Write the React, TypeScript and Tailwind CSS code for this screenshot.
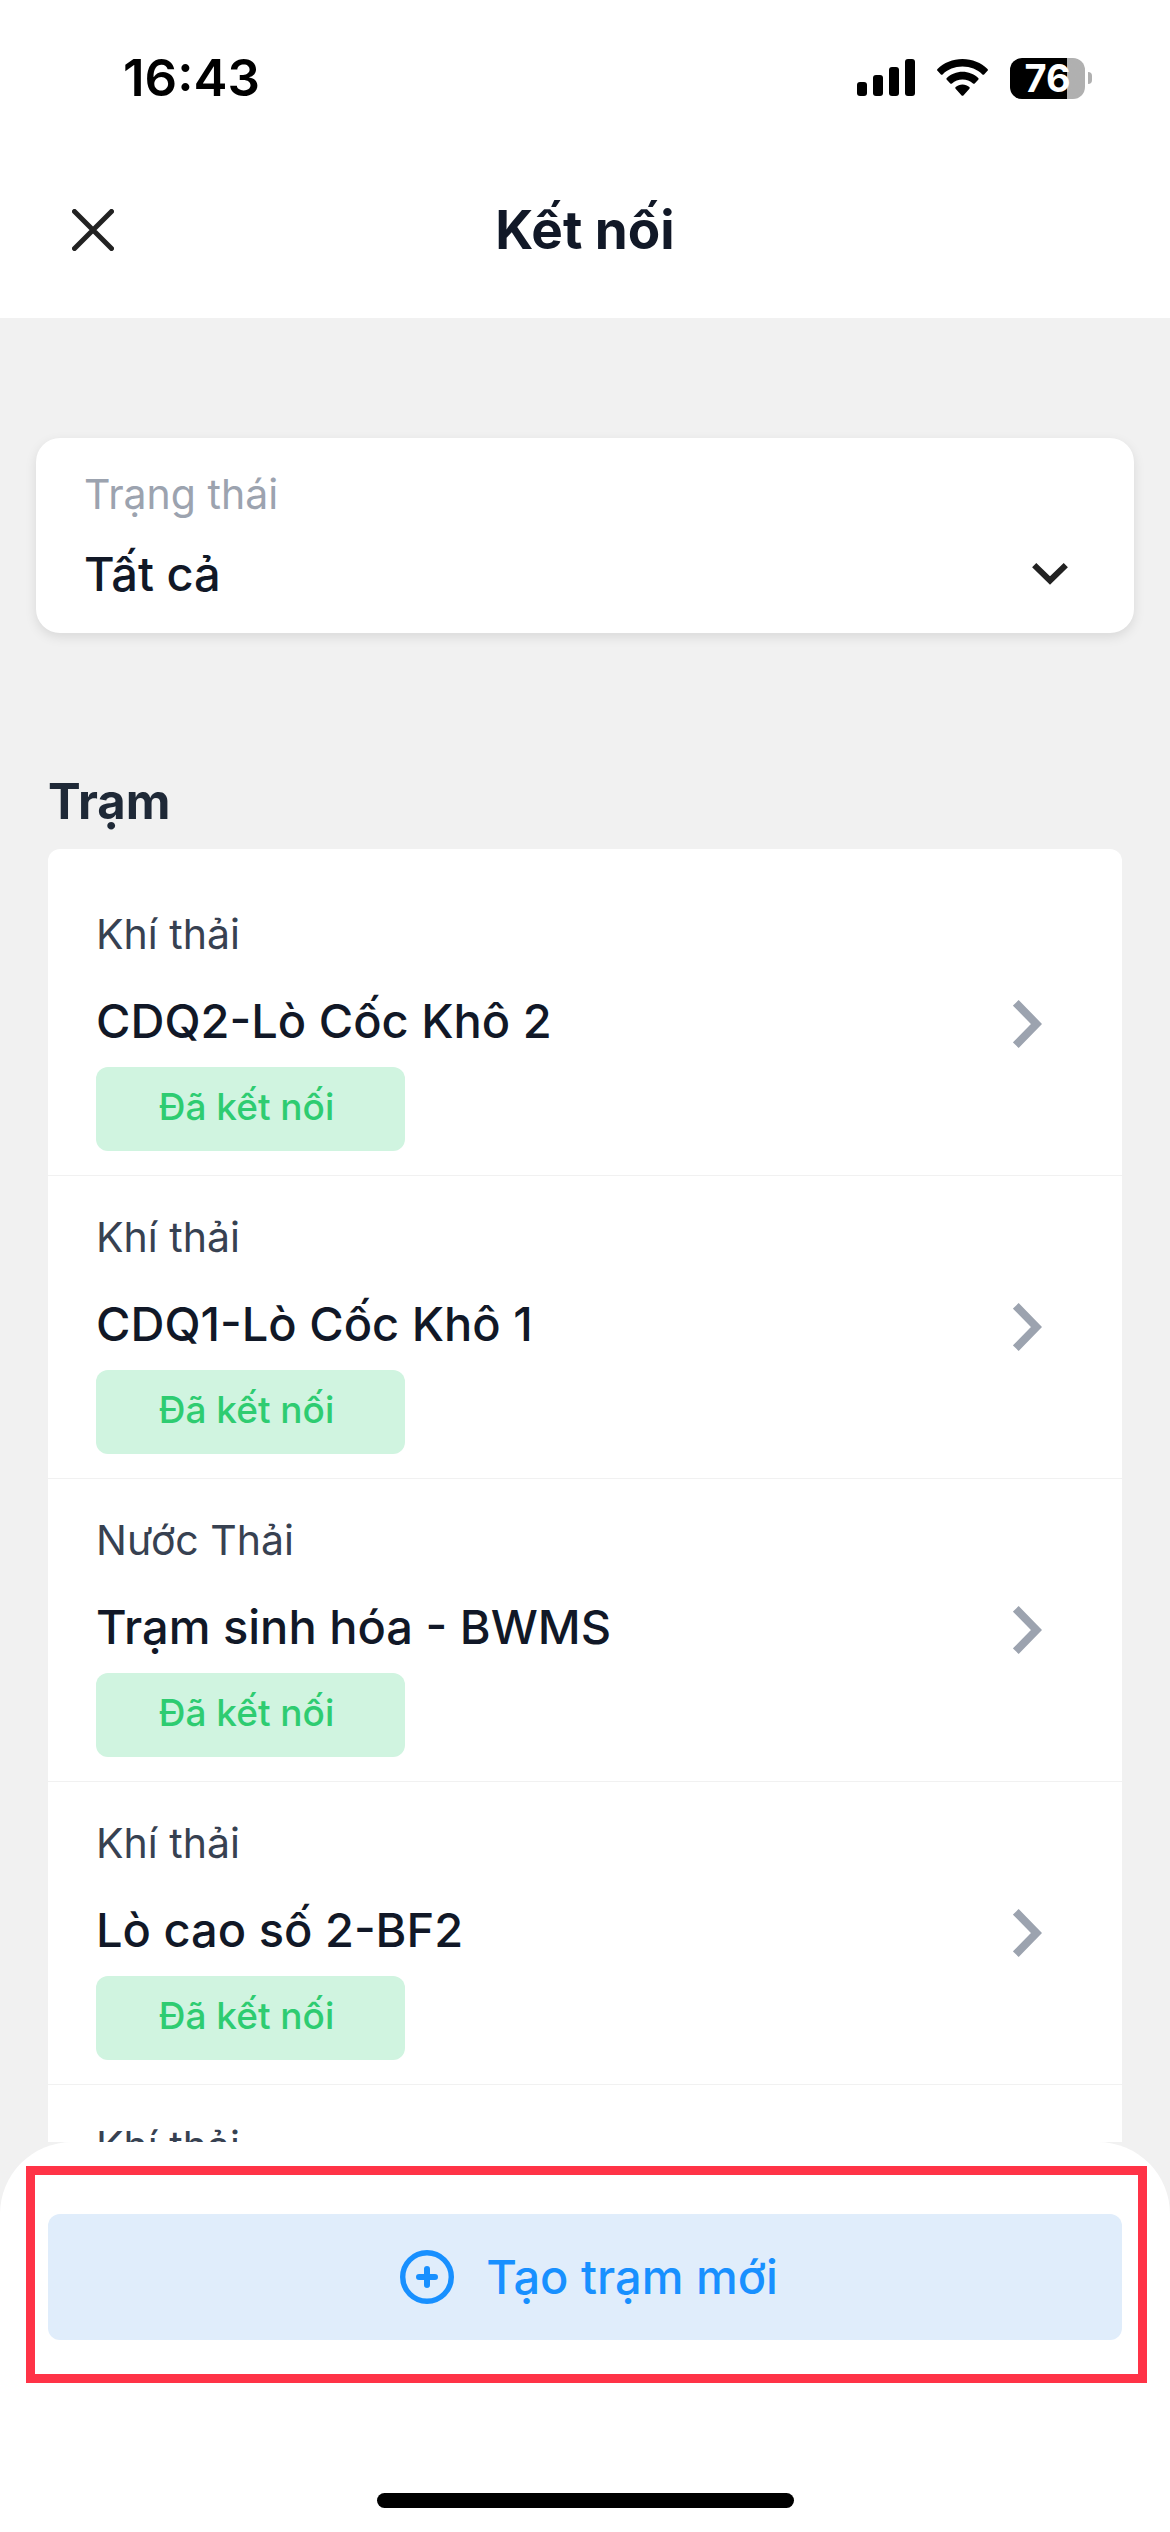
import { useState } from "react";

interface Station {
  id: number;
  type: string;
  name?: string;
}

const stations: Station[] = [
  { id: 1, type: "Khí thải", name: "CDQ2-Lò Cốc Khô 2" },
  { id: 2, type: "Khí thải", name: "CDQ1-Lò Cốc Khô 1" },
  { id: 3, type: "Nước Thải", name: "Trạm sinh hóa - BWMS" },
  { id: 4, type: "Khí thải", name: "Lò cao số 2-BF2" },
  { id: 5, type: "Khí thải" },
];

function StatusBar() {
  return (
    <div className="flex h-[142px] items-start justify-between pt-12 pr-[78px] pl-[123px] text-black">
      <span className="text-[51px] leading-[60px] font-semibold">16:43</span>
      <div className="flex h-[60px] items-center gap-[22px]">
        <svg width="58" height="38" viewBox="0 0 58 38" aria-hidden="true">
          <rect x="0" y="23" width="10" height="14" rx="3" />
          <rect x="16" y="16" width="10" height="21" rx="3" />
          <rect x="32" y="8" width="10" height="29" rx="3" />
          <rect x="48" y="0" width="10" height="37" rx="3" />
        </svg>
        <svg width="51" height="38" viewBox="0 0 51 38" aria-hidden="true">
          <path d="M25.5 0C35.3 0 44.2 3.8 50.5 10c.6.6.6 1.2 0 1.8l-3.4 3.6c-.5.5-1.200.5-1.700 0C40.300 10.600 33.300 7.600 25.500 7.600S10.700 10.600 5.600 15.400c-.5.5-1.200.5-1.700 0L.5 11.800c-.6-.6-.6-1.200 0-1.800C6.800 3.800 15.700 0 25.500 0z" />
          <path d="M25.5 12.8c6 0 11.5 2.300 15.700 6.200.6.600.6 1.200 0 1.800l-3.500 3.600c-.5.5-1.200.5-1.700 0-2.800-2.500-6.500-4-10.500-4s-7.700 1.500-10.500 4c-.5.5-1.200.5-1.700 0l-3.500-3.600c-.6-.6-.6-1.200 0-1.800 4.200-3.900 9.700-6.200 15.700-6.200z" />
          <path d="M25.5 25.600c2.600 0 4.900.9 6.800 2.400.6.500.6 1.200.1 1.800l-6 6.600c-.5.600-1.300.6-1.800 0l-6-6.600c-.5-.6-.5-1.300.1-1.800 1.900-1.500 4.200-2.400 6.800-2.400z" />
        </svg>
        <div className="flex items-center gap-[3px]">
          <div className="flex h-[41px] w-[75px] items-center justify-center rounded-[12px] bg-linear-to-r from-black from-76% to-[#b0b0b0] to-76% text-[38px] leading-[41px] font-bold text-white">
            76
          </div>
          <div className="h-3 w-1 rounded-r-full bg-[#b0b0b0]" />
        </div>
      </div>
    </div>
  );
}

function StationRow({ station }: { station: Station }) {
  return (
    <li className="border-b border-[#f1f1f1]">
      <button
        type="button"
        className="flex w-full items-center justify-between pt-9 pr-20 pb-6 pl-12 text-left"
      >
        <span className="flex flex-col items-start">
          <span className="text-[41px] leading-[50px] text-[#374151]">{station.type}</span>
          {station.name && (
            <>
              <span className="mt-[34px] text-[47px] leading-[56px] font-medium text-[#111827]">
                {station.name}
              </span>
              <span className="mt-[18px] flex h-[84px] w-[309px] items-center justify-center rounded-[12px] bg-[#d0f4e0] pr-2 pb-1 text-[37px] leading-[48px] font-medium text-[#2ecc71]">
                Đã kết nối
              </span>
            </>
          )}
        </span>
        {station.name && (
          <svg
            className="mb-3 shrink-0"
            width="29"
            height="48"
            viewBox="0 0 29 48"
            fill="none"
            aria-hidden="true"
          >
            <path d="M2.800 2.800 23.500 24 2.800 45.200" stroke="#9ca3af" strokeWidth="8" />
          </svg>
        )}
      </button>
    </li>
  );
}

export default function App() {
  const [status, setStatus] = useState("all");

  return (
    <div className="flex h-screen flex-col bg-[#f1f1f1] font-['Inter','Liberation_Sans',sans-serif]">
      <div className="bg-white">
        <StatusBar />
        <header className="grid h-44 grid-cols-[1fr_auto_1fr] items-center px-[72px]">
          <button type="button" aria-label="Đóng" className="justify-self-start">
            <svg width="42" height="42" viewBox="0 0 42 42" fill="none" aria-hidden="true">
              <path
                d="M2.500 2.500l37 37M39.500 2.500l-37 37"
                stroke="#222222"
                strokeWidth="5"
                strokeLinecap="round"
              />
            </svg>
          </button>
          <h1 className="text-[53px] leading-[64px] font-bold text-[#111827]">Kết nối</h1>
        </header>
      </div>

      <main className="min-h-0 flex-1 overflow-y-auto pt-[120px] [scrollbar-width:none]">
        <div className="mx-9 rounded-[24px] bg-white pt-[30px] pr-[66px] pb-[29px] pl-12 shadow-[0_4px_12px_rgba(0,0,0,0.1)]">
          <label htmlFor="status" className="block text-[41px] leading-[52px] text-[#9ca3af]">
            Trạng thái
          </label>
          <div className="mt-6 grid items-center">
            <select
              id="status"
              value={status}
              onChange={(e) => setStatus(e.target.value)}
              className="col-start-1 row-start-1 h-[60px] w-full appearance-none bg-transparent text-[47px] leading-[60px] font-medium text-[#111827] outline-none"
            >
              <option value="all">Tất cả</option>
              <option value="connected">Đã kết nối</option>
            </select>
            <svg
              className="pointer-events-none col-start-1 row-start-1 justify-self-end"
              width="36"
              height="22"
              viewBox="0 0 36 22"
              fill="none"
              aria-hidden="true"
            >
              <path d="M2.200 2.200 18 17.500 33.800 2.200" stroke="#222222" strokeWidth="6" />
            </svg>
          </div>
        </div>

        <section className="mt-[141px] px-12">
          <h2 className="text-[49px] leading-[56px] font-bold text-[#1f2937]">Trạm</h2>
          <ul className="mt-[19px] rounded-[12px] bg-white pt-6 pb-12">
            {stations.map((station) => (
              <StationRow key={station.id} station={station} />
            ))}
          </ul>
        </section>
      </main>

      <footer className="flex flex-col items-center rounded-t-[72px] bg-white px-12 pt-[72px] pb-6">
        <div className="relative w-full">
          <button
            type="button"
            className="flex h-[126px] w-full items-center justify-center gap-8 rounded-[12px] bg-[#e0edfb] pl-2 text-[47px] leading-[60px] font-medium text-[#1890ff]"
          >
            <svg width="54" height="54" viewBox="0 0 54 54" fill="none" aria-hidden="true">
              <circle cx="27" cy="27" r="24.300" stroke="currentColor" strokeWidth="5.400" />
              <path
                d="M27 19v16M19 27h16"
                stroke="currentColor"
                strokeWidth="6"
                strokeLinecap="round"
              />
            </svg>
            Tạo trạm mới
          </button>
          {/* highlight frame around the create action */}
          <div className="pointer-events-none absolute -top-12 -right-[25px] -bottom-[43px] -left-[22px] border-[9px] border-[#ff3347]" />
        </div>
        <div className="mt-[153px] h-[15px] w-[417px] rounded-full bg-black" />
      </footer>
    </div>
  );
}
